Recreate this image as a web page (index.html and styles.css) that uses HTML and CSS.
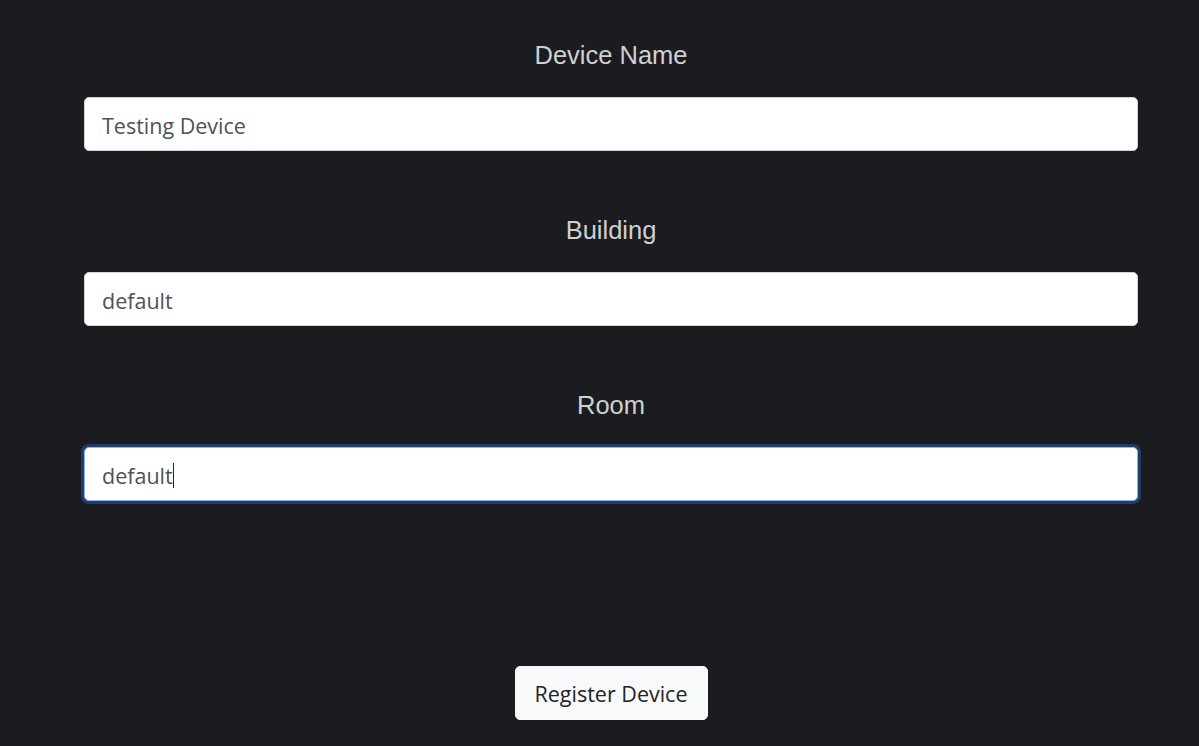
FILE: index.html
```html
<!DOCTYPE html>
<html lang="en">
<head>
<meta charset="utf-8">
<title>Register Device</title>
<link rel="stylesheet" href="styles.css">
</head>
<body>
<form class="form">
  <div class="field">
    <label class="label" for="name">Device Name</label>
    <input class="input" id="name" type="text" value="Testing Device">
  </div>
  <div class="field">
    <label class="label" for="building">Building</label>
    <input class="input" id="building" type="text" value="default">
  </div>
  <div class="field">
    <label class="label" for="room">Room</label>
    <div class="input-wrap">
      <input class="input input-focus" id="room" type="text" value="default">
      <div class="caret-layer" aria-hidden="true"><span class="ghost">default</span><span class="caret"></span></div>
    </div>
  </div>
  <div class="actions">
    <button class="btn" type="button">Register Device</button>
  </div>
</form>
</body>
</html>
```

FILE: styles.css
```css
html, body {
  margin: 0;
  padding: 0;
  background: #1b1c20;
  height: 100%;
}
body {
  overflow: hidden;
}
.form {
  width: 1054px;
  margin-left: 84px;
  padding-top: 40px;
  display: flex;
  flex-direction: column;
  gap: 64px;
}
.field {
  display: flex;
  flex-direction: column;
  align-items: stretch;
}
.label {
  font-family: "Liberation Sans", Arial, sans-serif;
  font-size: 25.5px;
  line-height: 30px;
  color: #cfd0d3;
  text-align: center;
  margin-bottom: 27px;
}
.input {
  box-sizing: border-box;
  height: 54px;
  width: 100%;
  margin: 0;
  padding: 2px 17px 0;
  font-family: "Open Sans", "Noto Sans", sans-serif;
  font-size: 21.5px;
  color: #4d5257;
  background: #ffffff;
  border: 1px solid #ced4da;
  border-radius: 5px;
  outline: none;
}
.input-focus,
.input:focus {
  border-color: #86b7fe;
  box-shadow: 0 0 0 3px #1f3d66;
}
.input-wrap {
  position: relative;
}
.caret-layer {
  position: absolute;
  left: 18px;
  top: 0;
  height: 54px;
  display: flex;
  align-items: center;
  padding-top: 2px;
  box-sizing: border-box;
  pointer-events: none;
  font-family: "Open Sans", "Noto Sans", sans-serif;
  font-size: 21.5px;
}
.ghost {
  color: transparent;
}
.caret {
  display: inline-block;
  width: 1px;
  height: 25px;
  background: #212529;
}
.actions {
  display: flex;
  justify-content: center;
  margin-top: 101px;
}
.btn {
  box-sizing: border-box;
  width: 193px;
  height: 54px;
  font-family: "Open Sans", "Noto Sans", sans-serif;
  font-size: 21.5px;
  color: #212529;
  background: #f8f9fa;
  border: 1px solid #f8f9fa;
  border-radius: 5px;
  padding: 0;
}
```
